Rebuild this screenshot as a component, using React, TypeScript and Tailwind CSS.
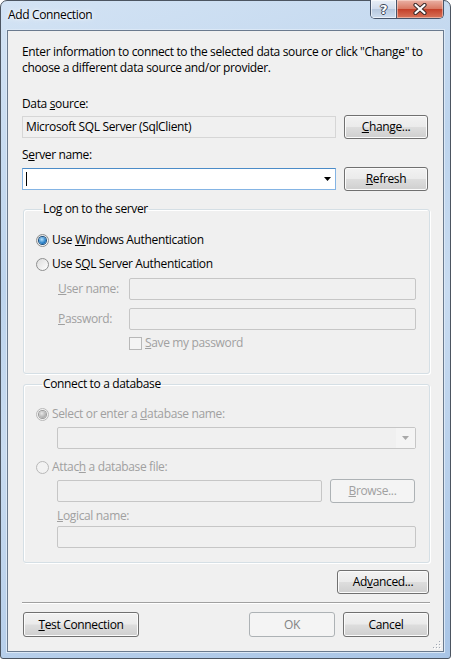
import React from "react";

type BtnProps = { children: React.ReactNode; className?: string; disabled?: boolean };

function Btn({ children, className = "", disabled }: BtnProps) {
  return (
    <div
      className={
        "flex items-center justify-center rounded-[3px] border " +
        (disabled
          ? "border-[#adb2b5] bg-[#f4f4f4] text-[#838383] "
          : "border-[#707070] bg-[linear-gradient(to_bottom,#f2f2f2_0%,#ebebeb_48%,#dddddd_52%,#cfcfcf_100%)] shadow-[inset_0_0_0_1px_#fbfbfb] text-black ") +
        className
      }
    >
      {children}
    </div>
  );
}

function Radio({ checked, disabled }: { checked?: boolean; disabled?: boolean }) {
  return (
    <span
      className={
        "flex h-[13px] w-[13px] shrink-0 items-center justify-center rounded-full border " +
        (disabled
          ? "border-[#b8b8b8] bg-[#f2f2f2]"
          : "border-[#8e8f8f] bg-[linear-gradient(135deg,#dcdcdc,#ffffff)]")
      }
    >
      {checked && (
        <span
          className={
            "h-[7px] w-[7px] rounded-full " +
            (disabled
              ? "bg-[radial-gradient(circle_at_40%_35%,#e8e8e8,#a8a8a8_75%)] ring-1 ring-[#9a9a9a]"
              : "bg-[radial-gradient(circle_at_40%_35%,#b5e3ff,#1d77c2_65%,#0b4b8c)] ring-1 ring-[#1b4e7c]")
          }
        />
      )}
    </span>
  );
}

function DisabledBox({ className = "" }: { className?: string }) {
  return <div className={"h-[22px] rounded-[2px] border border-[#c6c6c6] bg-[#f0f0f0] " + className} />;
}

export default function App() {
  return (
    <div className="h-[659px] w-[451px] bg-white font-['Open_Sans',sans-serif] text-[12px] leading-[16px] tracking-[-0.35px] text-black">
      <div className="flex h-full w-full flex-col rounded-t-[7px] rounded-b-[3px] border border-[#4c5561] bg-[linear-gradient(160deg,#d3e3f4_0%,#bdd4ed_35%,#c8dbf0_55%,#a9c5e6_100%)]">
        {/* title bar */}
        <div className="flex h-[29px] shrink-0 items-start">
          <span className="ml-[7px] mt-[6px] [text-shadow:0_0_6px_#ffffff,0_0_3px_#ffffff]">Add Connection</span>
          <div className="ml-auto mr-[6px] flex h-[19px] -mt-px overflow-hidden rounded-b-[5px] border border-t-0 border-[#47556a]">
            <div className="flex w-[26px] items-center justify-center border-r border-[#47556a] bg-[linear-gradient(to_bottom,#e9eff6_0%,#d2dded_48%,#b6c8de_52%,#cfdef0_100%)] shadow-[inset_0_0_0_1px_rgba(255,255,255,0.6)]">
              <span className="font-['DejaVu_Sans',sans-serif] text-[13px] font-bold leading-[13px] text-white [text-shadow:1px_0_0_#3b4757,-1px_0_0_#3b4757,0_1px_0_#3b4757,0_-1px_0_#3b4757]">
                ?
              </span>
            </div>
            <div className="flex w-[46px] items-center justify-center bg-[linear-gradient(to_bottom,#eab2a5_0%,#d97a64_48%,#c4412a_52%,#d8745a_100%)] shadow-[inset_0_0_0_1px_rgba(255,230,220,0.5)]">
              <svg width="14" height="12" viewBox="0 0 14 12">
                <path d="M2.5 2 L11.5 10 M11.5 2 L2.5 10" stroke="#3a2a2a" strokeWidth="4.2" strokeLinecap="round" />
                <path d="M2.5 2 L11.5 10 M11.5 2 L2.5 10" stroke="#ffffff" strokeWidth="2.2" strokeLinecap="round" />
              </svg>
            </div>
          </div>
        </div>

        {/* client area */}
        <div className="relative mx-[6px] mb-[6px] flex flex-1 flex-col border border-[#6a7a8e] bg-[#f0f0f0] pl-[14px] shadow-[0_0_0_1px_#dbe8f6]">
          <div className="mt-[13px] w-[412px]">
            Enter information to connect to the selected data source or click "Change" to choose a different data source and/or provider.
          </div>

          <div className="mt-[20px]">
            Data <u>s</u>ource:
          </div>
          <div className="mt-[3px] flex items-center gap-[8px]">
            <div className="flex h-[22px] w-[314px] items-center border border-[#d6d6d6] bg-[#f0f0f0] pl-[3px]">
              Microsoft SQL Server (SqlClient)
            </div>
            <Btn className="h-[24px] w-[84px]">
              <span>
                <u>C</u>hange...
              </span>
            </Btn>
          </div>

          <div className="mt-[8px]">
            S<u>e</u>rver name:
          </div>
          <div className="mt-[4px] flex items-center gap-[8px]">
            <div className="flex h-[22px] w-[314px] items-center border border-[#84b4e4] border-t-[#4c8cc8] bg-white pl-[3px] pr-[4px]">
              <span className="h-[14px] w-px bg-black" />
              <svg className="ml-auto" width="7" height="4" viewBox="0 0 7 4">
                <path d="M0 0 H7 L3.5 4 Z" fill="#000" />
              </svg>
            </div>
            <Btn className="h-[24px] w-[84px]">
              <span>
                <u>R</u>efresh
              </span>
            </Btn>
          </div>

          {/* Log on group */}
          <fieldset className="ml-px mt-[10px] h-[173px] w-[407px] rounded-[3px] border border-[#d5dfe5] px-[12px] shadow-[inset_1px_1px_0_#ffffff,1px_1px_0_#ffffff]">
            <legend className="ml-[6px] px-[1px]">Log on to the server</legend>
            <div className="mt-[15px] flex h-[16px] items-center">
              <Radio checked />
              <span className="ml-[3px]">
                Use <u>W</u>indows Authentication
              </span>
            </div>
            <div className="mt-[8px] flex h-[16px] items-center">
              <Radio />
              <span className="ml-[3px]">
                Use S<u>Q</u>L Server Authentication
              </span>
            </div>
            <div className="mt-[6px] flex h-[22px] items-center text-[#a0a0a0]">
              <span className="ml-[22px] w-[71px]">
                <u>U</u>ser name:
              </span>
              <DisabledBox className="w-[287px]" />
            </div>
            <div className="mt-[8px] flex h-[22px] items-center text-[#a0a0a0]">
              <span className="ml-[22px] w-[71px]">
                <u>P</u>assword:
              </span>
              <DisabledBox className="w-[287px]" />
            </div>
            <div className="mt-[5px] flex h-[16px] items-center text-[#a0a0a0]">
              <span className="ml-[93px] h-[13px] w-[13px] border border-[#b8b8b8] bg-[#f4f4f4]" />
              <span className="ml-[3px]">
                <u>S</u>ave my password
              </span>
            </div>
          </fieldset>

          {/* Connect to db group */}
          <fieldset className="ml-px mt-[2px] h-[187px] w-[407px] rounded-[3px] border border-[#d5dfe5] px-[12px] shadow-[inset_1px_1px_0_#ffffff,1px_1px_0_#ffffff]">
            <legend className="ml-[6px] px-[1px]">Connect to a database</legend>
            <div className="mt-[14px] flex h-[16px] items-center text-[#a0a0a0]">
              <Radio checked disabled />
              <span className="ml-[3px]">
                Select or enter a <u>d</u>atabase name:
              </span>
            </div>
            <div className="ml-[21px] mt-[5px] flex h-[22px] w-[359px] items-center rounded-[2px] border border-[#c6c6c6] bg-[#f0f0f0]">
              <div className="ml-auto flex h-full w-[19px] items-center justify-center bg-[#f4f4f4]">
                <svg width="7" height="4" viewBox="0 0 7 4">
                  <path d="M0 0 H7 L3.5 4 Z" fill="#a8a8a8" />
                </svg>
              </div>
            </div>
            <div className="mt-[10px] flex h-[16px] items-center text-[#a0a0a0]">
              <Radio disabled />
              <span className="ml-[3px]">
                Attac<u>h</u> a database file:
              </span>
            </div>
            <div className="ml-[21px] mt-[4px] flex h-[24px] items-center gap-[8px]">
              <DisabledBox className="w-[265px]" />
              <Btn disabled className="h-[24px] w-[85px]">
                <span className="text-[#a0a0a0]">
                  <u>B</u>rowse...
                </span>
              </Btn>
            </div>
            <div className="ml-[21px] mt-[5px] text-[#a0a0a0]">
              <u>L</u>ogical name:
            </div>
            <DisabledBox className="ml-[21px] mt-[2px] w-[359px]" />
          </fieldset>

          <Btn className="mr-[14px] mt-[7px] h-[24px] w-[92px] self-end">
            <span>
              Ad<u>v</u>anced...
            </span>
          </Btn>

          <div className="mt-[8px] h-[2px] w-[408px] border-t border-b border-t-[#a0a0a0] border-b-white" />

          <div className="mt-[8px] flex w-[407px] items-center">
            <Btn className="ml-px h-[25px] w-[116px]">
              <span>
                <u>T</u>est Connection
              </span>
            </Btn>
            <Btn disabled className="ml-auto h-[25px] w-[86px]">
              <span>OK</span>
            </Btn>
            <Btn className="ml-[8px] h-[25px] w-[86px]">
              <span>Cancel</span>
            </Btn>
          </div>

          <svg className="absolute bottom-[1px] right-[1px]" width="10" height="10" viewBox="0 0 10 10">
            {[
              [8, 2],
              [8, 5],
              [5, 5],
              [8, 8],
              [5, 8],
              [2, 8],
            ].map(([x, y], i) => (
              <g key={i}>
                <rect x={x} y={y} width="1" height="1" fill="#ffffff" />
                <rect x={x - 1} y={y - 1} width="1" height="1" fill="#a0a8b4" />
              </g>
            ))}
          </svg>
        </div>
      </div>
    </div>
  );
}
